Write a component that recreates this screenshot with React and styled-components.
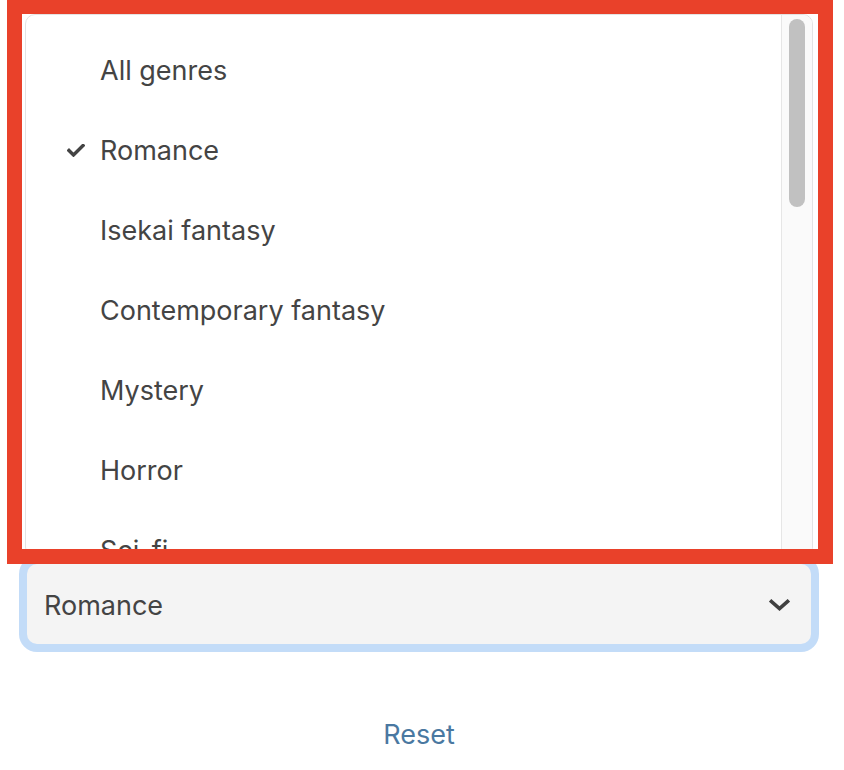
import styled, { createGlobalStyle } from 'styled-components';

const genres = [
  'All genres',
  'Romance',
  'Isekai fantasy',
  'Contemporary fantasy',
  'Mystery',
  'Horror',
  'Sci-fi',
];

const selected = 'Romance';

const GlobalStyle = createGlobalStyle`
  html, body {
    margin: 0;
    background: #fff;
  }

  body {
    font-family: Inter, 'Liberation Sans', sans-serif;
    color: #444;
  }
`;

const CheckIcon = () => (
  <svg width='18' height='13' viewBox='0 0 18 13' fill='none'>
    <path
      d='M2 6.5 L6.5 11 L16 1.5'
      stroke='#444'
      strokeWidth='3.4'
      strokeLinecap='square'
    />
  </svg>
);

const ChevronIcon = () => (
  <svg width='21' height='12' viewBox='0 0 21 12' fill='none'>
    <path
      d='M2.5 2.5 L10.5 9.5 L18.5 2.5'
      stroke='#404040'
      strokeWidth='3.6'
      strokeLinecap='square'
    />
  </svg>
);

const App = () => {
  return (
    <>
      <GlobalStyle />
      <Page>
        <Menu>
          <List>
            {genres.map((genre) => (
              <Option key={genre}>
                <CheckSlot>{genre === selected && <CheckIcon />}</CheckSlot>
                <span>{genre}</span>
              </Option>
            ))}
          </List>
          <Track>
            <Thumb />
          </Track>
        </Menu>

        <Select>
          <span>{selected}</span>
          <ChevronIcon />
        </Select>

        <Reset>Reset</Reset>

        <Frame />
      </Page>
    </>
  );
};

export default App;

const Page = styled.div`
  position: relative;
  min-height: 770px;
  box-sizing: border-box;
  padding: 564px 33px 0 27px;
  overflow: hidden;
`;

const Menu = styled.div`
  position: absolute;
  top: 14px;
  left: 25px;
  width: 788px;
  height: 543px;
  box-sizing: border-box;
  display: flex;
  background: #fff;
  border: 1px solid #e3e3e3;
  border-radius: 10px;
  overflow: hidden;
  z-index: 2;
`;

const List = styled.div`
  flex: 1;
  padding-top: 15px;
  overflow: hidden;
`;

const Option = styled.div`
  display: grid;
  grid-template-columns: 33px 1fr;
  align-items: center;
  height: 80px;
  padding-left: 41px;
  font-size: 27px;
  color: #444;
`;

const CheckSlot = styled.div`
  display: flex;
  align-items: center;
  padding-top: 1px;
`;

const Track = styled.div`
  width: 31px;
  box-sizing: border-box;
  border-left: 1px solid #e6e6e6;
  background: #fafafa;
  padding: 4px 0 0 7px;
`;

const Thumb = styled.div`
  width: 16px;
  height: 188px;
  border-radius: 8px;
  background: #c1c1c1;
`;

const Select = styled.div`
  display: flex;
  align-items: center;
  justify-content: space-between;
  height: 80px;
  box-sizing: border-box;
  padding: 2px 21px 0 17px;
  background: #f4f4f4;
  border-radius: 10px;
  box-shadow: 0 0 0 8px #c3dcf8;
  font-size: 27px;
  color: #444;
`;

const Reset = styled.div`
  margin-top: 74px;
  text-align: center;
  font-size: 27px;
  color: #4a78a1;
`;

const Frame = styled.div`
  position: absolute;
  top: 0;
  left: 7px;
  width: 826px;
  height: 564px;
  box-sizing: border-box;
  border-style: solid;
  border-color: #e9412a;
  border-width: 14px 15px 15px 15px;
  z-index: 3;
  pointer-events: none;
`;
